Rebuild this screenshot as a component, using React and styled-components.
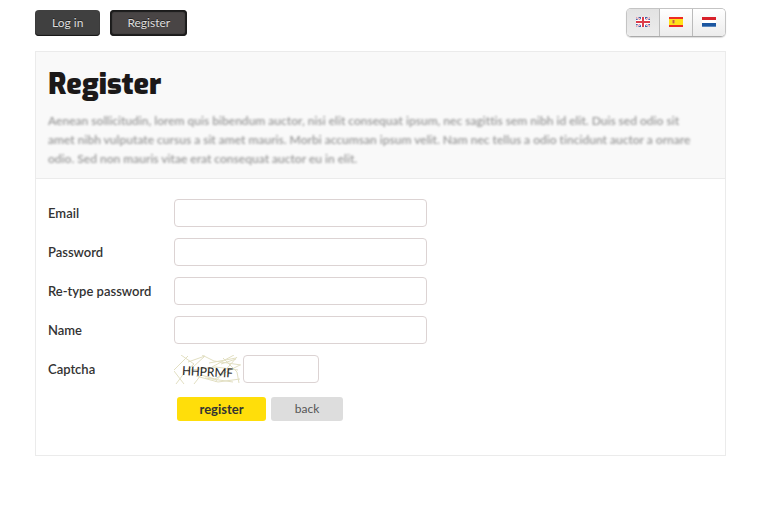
import React from 'react'
import styled, { createGlobalStyle, css } from 'styled-components'

const GlobalStyle = createGlobalStyle`
  body {
    margin: 0;
    background: #fff;
    color: #333;
    font-family: Lato, Carlito, 'Open Sans', sans-serif;
    font-size: 13px;
  }

  button,
  input {
    box-sizing: border-box;
    margin: 0;
    font-family: inherit;
  }
`

const Page = styled.div`
  padding: 8px 37px 32px 35px;
`

const TopBar = styled.header`
  display: flex;
  justify-content: space-between;
  align-items: center;
  height: 29px;
  margin-bottom: 14px;
`

const Nav = styled.nav`
  display: flex;
  gap: 10px;
`

const NavLink = styled.a`
  box-sizing: border-box;
  height: 26px;
  padding: 0 17px;
  border-radius: 4px;
  background: #404040;
  box-shadow: inset 0 -1px 1px #151515;
  color: #ddd;
  font-size: 12px;
  line-height: 26px;
  text-decoration: none;
  text-shadow: 0 -1px 0 #222;

  ${({ $active }) => $active && css`
    background: #494545;
    box-shadow: inset 0 0 1px 2px #1b1b1b;
  `}
`

const Languages = styled.div`
  display: flex;
  box-sizing: border-box;
  width: 100px;
  height: 29px;
  overflow: hidden;
  border: 1px solid #c4c4c4;
  border-bottom-color: #aaa;
  border-radius: 5px;
  box-shadow: 0 1px 1px #ddd;
`

const Language = styled.button`
  display: flex;
  flex: 1;
  align-items: center;
  justify-content: center;
  padding: 0 0 2px;
  border: 0;
  background: ${({ $active }) => $active
    ? 'linear-gradient(#e2e2e2, #ececec)'
    : 'linear-gradient(#fff, #ececec)'};

  & + & {
    border-left: 1px solid #bbb;
  }
`

const Flag = styled.svg`
  display: block;
  width: 14px;
  height: 10px;
`

const Panel = styled.main`
  border: 1px solid #ebebeb;
`

const Intro = styled.section`
  padding: 12px 18px 10px 12px;
  border-bottom: 1px solid #ebebeb;
  background: #f9f9f9;
`

const Title = styled.h1`
  margin: 0 0 7px;
  color: #1c1919;
  font-family: Exo, 'Exo 2', Inter, sans-serif;
  font-size: 29px;
  font-weight: 900;
  line-height: 40px;
`

const Lead = styled.p`
  margin: 0;
  color: #999;
  font-size: 12px;
  font-variant-ligatures: none;
  font-weight: 600;
  line-height: 19px;
  filter: blur(1px);
`

const Form = styled.form`
  padding: 20px 12px 34px;
`

const Row = styled.div`
  display: flex;
  align-items: center;
  margin-bottom: 11px;
`

const Label = styled.label`
  flex: none;
  width: 126px;
  color: #333;
  font-size: 13px;
  font-weight: 600;
  line-height: 20px;
`

const Input = styled.input`
  width: ${({ $short }) => ($short ? '76px' : '253px')};
  height: 28px;
  padding: 4px 6px;
  border: 1px solid #dcd3d3;
  border-radius: 4px;
  background: #fff;
  font-size: 13px;
`

const CaptchaImage = styled.svg`
  flex: none;
  width: 67px;
  height: 30px;
  margin: 0 2px -2px 0;
`

const Actions = styled.div`
  display: flex;
  gap: 5px;
  padding: 3px 0 0 129px;
`

const Button = styled.button`
  width: ${({ $primary }) => ($primary ? '89px' : '72px')};
  height: 24px;
  padding: 0;
  border: 0;
  border-radius: 3px;
  background: ${({ $primary }) => ($primary ? '#ffde0a' : '#ddd')};
  color: ${({ $primary }) => ($primary ? '#333' : '#555')};
  font-size: ${({ $primary }) => ($primary ? '13px' : '12px')};
  font-weight: ${({ $primary }) => ($primary ? 700 : 400)};
  line-height: 24px;
`

const FlagUk = () => (
  <Flag viewBox='0 0 14 10'>
    <path fill='#4a62a8' d='M0 0h14v10H0z' />
    <path stroke='#fff' strokeWidth='2' d='M0 0l14 10M14 0L0 10' />
    <path stroke='#dc5a68' strokeWidth='.7' d='M0 0l14 10M14 0L0 10' />
    <path stroke='#fff' strokeWidth='4' d='M7 0v10M0 5h14' />
    <path stroke='#dc3c4a' strokeWidth='2' d='M7 0v10M0 5h14' />
  </Flag>
)

const FlagSpain = () => (
  <Flag viewBox='0 0 14 10'>
    <path fill='#ee2c22' d='M0 0h14v10H0z' />
    <path fill='#ffe21a' d='M0 2h14v6H0z' />
    <path fill='#e0a040' d='M3 3h3v3l-1.500 1L3 6z' />
    <path fill='#c86038' d='M4 3h1v3H4z' />
  </Flag>
)

const FlagNetherlands = () => (
  <Flag viewBox='0 0 14 10'>
    <path fill='#fff' d='M0 0h14v10H0z' />
    <path fill='#d8202a' d='M0 0h14v3H0z' />
    <path fill='#1c56a0' d='M0 6h14v3H0z' />
    <path fill='#5a86bc' d='M0 9h14v1H0z' />
  </Flag>
)

const Captcha = () => (
  <CaptchaImage viewBox='0 0 67 30' role='img' aria-label='Captcha code'>
    <g fill='none' stroke='#e2dfc2' strokeWidth='1'>
      <path d='M7 0l13 9l-9 8L2 29M0 15L14 1M0 16l10 13M14 7L31 1' />
      <path d='M31 1L19 12M28 0l12 6l27 4M35 8L62 3M38 12L60 0' />
      <path d='M20 29l7-9l14 4l13-8l12-6M22 21l22 6l22-3M31 23l28 4' />
      <path d='M41 27L63 2M47 9l15-5M49 3l14 14l2 11M17 15l25-3l22 3' />
    </g>
    <text
      x='8'
      y='20'
      fill='#292929'
      fontFamily='Carlito, Lato, sans-serif'
      fontSize='14'
      transform='rotate(3 8 20)'
    >
      HHPRMF
    </text>
  </CaptchaImage>
)

const languages = [
  { name: 'English', Icon: FlagUk },
  { name: 'Español', Icon: FlagSpain },
  { name: 'Nederlands', Icon: FlagNetherlands }
]

const fields = [
  { id: 'email', label: 'Email', type: 'email' },
  { id: 'password', label: 'Password', type: 'password' },
  { id: 'password2', label: 'Re-type password', type: 'password' },
  { id: 'name', label: 'Name', type: 'text' }
]

const App = () => (
  <Page>
    <GlobalStyle />
    <TopBar>
      <Nav>
        <NavLink href='#login'>Log in</NavLink>
        <NavLink href='#register' $active>Register</NavLink>
      </Nav>
      <Languages>
        {languages.map(({ name, Icon }, i) => (
          <Language key={name} type='button' aria-label={name} $active={i === 0}>
            <Icon />
          </Language>
        ))}
      </Languages>
    </TopBar>
    <Panel>
      <Intro>
        <Title>Register</Title>
        <Lead>
          Aenean sollicitudin, lorem quis bibendum auctor, nisi elit consequat ipsum,
          nec sagittis sem nibh id elit. Duis sed odio sit amet nibh vulputate cursus a
          sit amet mauris. Morbi accumsan ipsum velit. Nam nec tellus a odio tincidunt
          auctor a ornare odio. Sed non mauris vitae erat consequat auctor eu in elit.
        </Lead>
      </Intro>
      <Form onSubmit={e => e.preventDefault()}>
        {fields.map(({ id, label, type }) => (
          <Row key={id}>
            <Label htmlFor={id}>{label}</Label>
            <Input id={id} name={id} type={type} />
          </Row>
        ))}
        <Row>
          <Label htmlFor='captcha'>Captcha</Label>
          <Captcha />
          <Input id='captcha' name='captcha' type='text' $short />
        </Row>
        <Actions>
          <Button type='submit' $primary>register</Button>
          <Button type='button'>back</Button>
        </Actions>
      </Form>
    </Panel>
  </Page>
)

export default App
